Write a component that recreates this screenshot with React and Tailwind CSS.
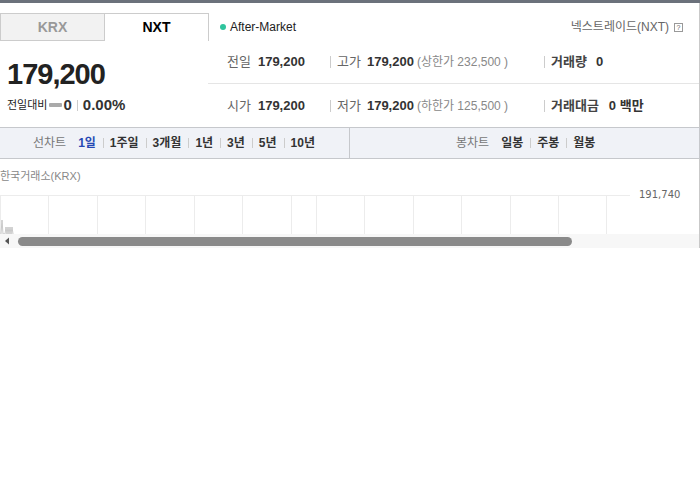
export default function App() {
  const font = { fontFamily: '"Liberation Sans", "Noto Sans CJK KR", sans-serif' };
  const gridX = [48, 97, 145, 194, 242, 291, 316, 364, 413, 461, 510, 558, 606];

  return (
    <div className="w-[700px] h-[490px] bg-white text-[#333]" style={font}>
      {/* top strip */}
      <div className="h-[3px] bg-[#6b717b]" />

      <div className="border-r border-[#c9c9c9]">
        {/* tabs row */}
        <div className="flex items-end h-[38px] pt-[11px]">
          <div className="w-[104px] h-[28px] flex items-center justify-center bg-[#f2f2f2] border border-[#cccccc] border-r-0 text-[14px] font-bold text-[#999]">
            KRX
          </div>
          <div className="w-[105px] h-[28px] flex items-center justify-center bg-white border border-[#cccccc] border-b-0 text-[14px] font-bold text-black">
            NXT
          </div>
          <div className="flex-1 h-[28px] flex items-center justify-between pl-[11px] pr-[16px]">
            <div className="flex items-center gap-[4px] text-[12px] text-[#222]">
              <span className="w-[6px] h-[6px] rounded-full bg-[#2ec49d]" />
              After-Market
            </div>
            <div className="flex items-center gap-[5px] text-[12px] text-[#666]">
              넥스트레이드(NXT)
              <span className="w-[9px] h-[9px] border border-[#999] text-[7px] leading-[7px] flex items-center justify-center text-[#666]">?</span>
            </div>
          </div>
        </div>

        {/* price + info */}
        <div className="flex h-[86px]">
          <div className="w-[208px] pl-[7px] pt-[16px]">
            <div className="text-[29px] font-bold text-[#222] tracking-[-1px] leading-[34px]">179,200</div>
            <div className="flex items-center mt-[3px]">
              <span className="text-[11px] text-[#222]">전일대비</span>
              <span className="w-[13px] h-[4px] bg-[#aaa] ml-[2px] mr-[1px] rounded-[1px]" />
              <span className="text-[15px] font-bold text-[#333]">0</span>
              <span className="w-px h-[11px] bg-[#ccc] mx-[5px]" />
              <span className="text-[15px] font-bold text-[#333]">0.00%</span>
            </div>
          </div>
          <div className="flex-1 flex flex-col text-[13px]">
            <div className="h-[43px] flex items-center border-b border-[#e5e5e5]">
              <div className="w-[122px] pl-[19px] flex items-center">
                <span className="text-[#666] mr-[7px]">전일</span>
                <span className="font-bold">179,200</span>
              </div>
              <div className="w-[214px] flex items-center">
                <span className="w-px h-[12px] bg-[#ccc] mr-[6px]" />
                <span className="text-[#666] mr-[6px]">고가</span>
                <span className="font-bold mr-[3px]">179,200</span>
                <span className="text-[12px] text-[#888]">(상한가 232,500 )</span>
              </div>
              <div className="flex items-center">
                <span className="w-px h-[12px] bg-[#ccc] mr-[6px]" />
                <span className="font-bold text-[#444] mr-[9px]">거래량</span>
                <span className="font-bold">0</span>
              </div>
            </div>
            <div className="flex-1 flex items-center">
              <div className="w-[122px] pl-[19px] flex items-center">
                <span className="text-[#666] mr-[7px]">시가</span>
                <span className="font-bold">179,200</span>
              </div>
              <div className="w-[214px] flex items-center">
                <span className="w-px h-[12px] bg-[#ccc] mr-[6px]" />
                <span className="text-[#666] mr-[6px]">저가</span>
                <span className="font-bold mr-[3px]">179,200</span>
                <span className="text-[12px] text-[#888]">(하한가 125,500 )</span>
              </div>
              <div className="flex items-center">
                <span className="w-px h-[12px] bg-[#ccc] mr-[6px]" />
                <span className="font-bold text-[#444] mr-[10px]">거래대금</span>
                <span className="font-bold">0 백만</span>
              </div>
            </div>
          </div>
        </div>
      </div>

      {/* chart toolbar */}
      <div className="flex h-[32px] bg-[#f0f2f7] border-y border-[#c6c8cc] text-[12px]">
        <div className="w-[350px] flex items-center pl-[33px] border-r border-[#c6c8cc]">
          <span className="text-[#777] mr-[12px]">선차트</span>
          {["1일", "1주일", "3개월", "1년", "3년", "5년", "10년"].map((t, i) => (
            <div key={t} className="flex items-center">
              {i > 0 && <span className="w-px h-[10px] bg-[#ccc] ml-[7px] mr-[6px]" />}
              <span className={i === 0 ? "font-bold text-[#2648b4]" : "font-bold text-[#333]"}>{t}</span>
            </div>
          ))}
        </div>
        <div className="flex-1 flex items-center pl-[106px] border-r border-[#c6c8cc]">
          <span className="text-[#777] mr-[12px]">봉차트</span>
          {["일봉", "주봉", "월봉"].map((t, i) => (
            <div key={t} className="flex items-center">
              {i > 0 && <span className="w-px h-[10px] bg-[#ccc] ml-[7px] mr-[6px]" />}
              <span className="font-bold text-[#333]">{t}</span>
            </div>
          ))}
        </div>
      </div>

      {/* chart */}
      <div className="border-r border-[#c9c9c9]">
        <div className="h-[30px] pt-[10px] text-[11px] text-[#888] leading-[14px]">한국거래소(KRX)</div>
        <svg width="699" height="45" className="block">
          <line x1="0" y1="6.5" x2="630" y2="6.5" stroke="#ececec" />
          <line x1="0.5" y1="6" x2="0.5" y2="45" stroke="#ececec" />
          {gridX.map((x) => (
            <line key={x} x1={x + 0.5} y1="6" x2={x + 0.5} y2="45" stroke="#ececec" />
          ))}
          <polyline points="1,45 2,31 3,45 5,45 6,38 7,45 8,38 9,45 10,38 11,45 12,38 13,45" fill="none" stroke="#bbb" strokeWidth="0.8" />
          <text x="639" y="6" fill="#666" style={{ fontFamily: '"DejaVu Sans", sans-serif', fontSize: 10 }} dominantBaseline="middle">191,740</text>
        </svg>
        <div className="h-[14px] bg-[#f7f7f7] flex items-center">
          <svg width="18" height="14" className="block">
            <polygon points="5,7 9,3.5 9,10.5" fill="#555" />
          </svg>
          <div className="w-[554px] h-[9px] rounded-full bg-[#8a8a8a]" />
        </div>
      </div>
    </div>
  );
}
